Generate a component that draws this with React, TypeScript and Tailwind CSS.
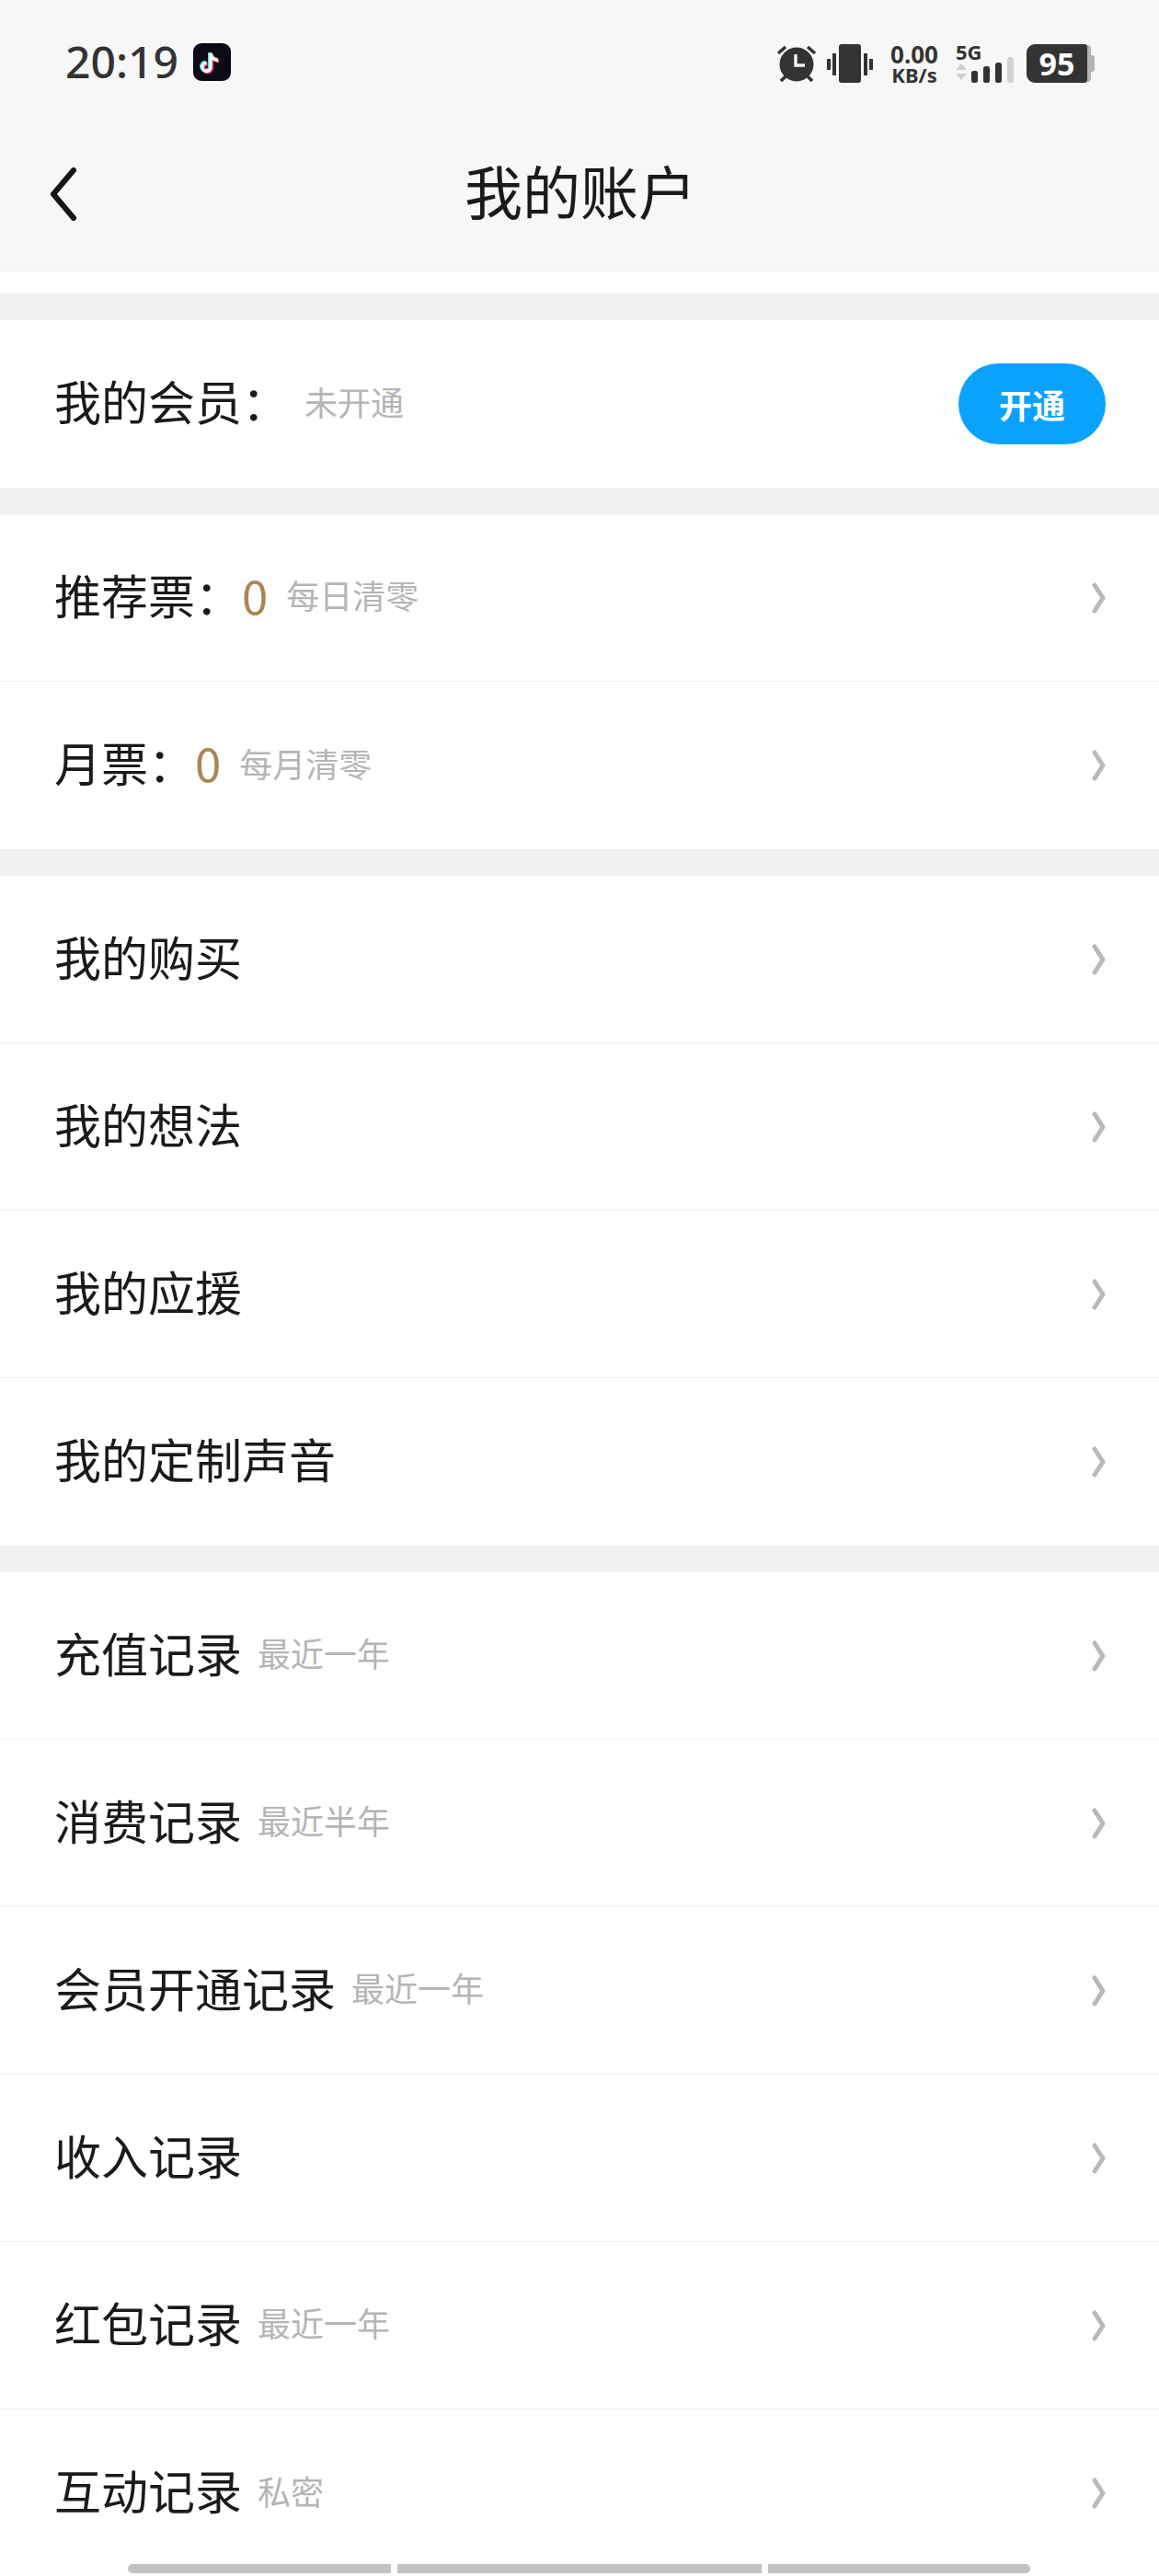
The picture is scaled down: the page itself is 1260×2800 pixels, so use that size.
const rowFont = { fontFamily: '"Noto Sans CJK SC", sans-serif' }

function Chevron() {
  return (
    <svg width="18" height="34" viewBox="0 0 18 34" className="mr-[58px] shrink-0">
      <path d="M6 3 L15 17 L6 31" fill="none" stroke="#b9b9b9" strokeWidth="5" strokeLinecap="round" strokeLinejoin="round" />
    </svg>
  )
}

function Row({ label, value, note, last }: { label: string; value?: string; note?: string; last?: boolean }) {
  return (
    <div className={`flex h-[182px] items-center bg-white pl-[59px] ${last ? '' : 'border-b border-[#f1f1f1]'}`}>
      <div className="flex items-center pb-[7px]">
        <span className="text-[51px] leading-none text-[#1a1a1a]">{label}</span>
        {value && <span className="pr-[3px] text-[51px] leading-none text-[#ad8553]">{value}</span>}
        {note && <span className="ml-[17px] text-[36px] leading-none text-[#b5b5b5]">{note}</span>}
      </div>
      <div className="flex-1" />
      <Chevron />
    </div>
  )
}

function Gap() {
  return <div className="h-[29px] bg-[#f1f1f1]" />
}

function TikTok() {
  return (
    <div className="ml-[16px] flex h-[41px] w-[41px] items-center justify-center rounded-[9px] bg-[#0b0b16]">
      <svg width="28" height="30" viewBox="0 0 28 30">
        <path d="M13 5 v15 a4.5 4.5 0 1 1 -4.5 -4.5 M13 5 c0.5 4 3.5 7 8 7.5" fill="none" stroke="#3ee0e6" strokeWidth="4" transform="translate(-1 -1)" />
        <path d="M13 5 v15 a4.5 4.5 0 1 1 -4.5 -4.5 M13 5 c0.5 4 3.5 7 8 7.5" fill="none" stroke="#f0305a" strokeWidth="4" transform="translate(1.2 1)" />
        <path d="M13 5 v15 a4.5 4.5 0 1 1 -4.5 -4.5 M13 5 c0.5 4 3.5 7 8 7.5" fill="none" stroke="#ffffff" strokeWidth="3.4" />
      </svg>
    </div>
  )
}

function StatusIcons() {
  return (
    <div className="flex items-center">
      <svg width="44" height="42" viewBox="0 0 44 42">
        <circle cx="22" cy="22" r="18.5" fill="#333" />
        <path d="M21 11 V23 H31" fill="none" stroke="#f7f7f7" strokeWidth="3.4" />
        <path d="M2 10 L10 3 M42 10 L34 3 M5 40 L10 35 M39 40 L34 35" stroke="#333" strokeWidth="3.6" />
      </svg>
      <svg width="50" height="42" viewBox="0 0 50 42" className="ml-[11px]">
        <rect x="13" y="0" width="24" height="42" rx="3" fill="#333" />
        <rect x="6" y="10" width="4" height="24" fill="#333" />
        <rect x="0" y="16" width="4" height="12" fill="#333" />
        <rect x="40" y="10" width="4" height="24" fill="#333" />
        <rect x="46" y="16" width="4" height="12" fill="#333" />
      </svg>
      <div className="ml-[18px] flex w-[54px] flex-col items-center font-bold text-[#333]" style={{ fontFamily: '"Noto Sans", sans-serif' }}>
        <span className="text-[26px] leading-[24px]">0.00</span>
        <span className="text-[22px] leading-[20px]">KB/s</span>
      </div>
      <div className="ml-[18px] flex h-[42px] w-[64px] flex-col justify-between">
        <span className="text-[22px] leading-[16px] font-bold text-[#333]" style={{ fontFamily: '"Noto Sans", sans-serif' }}>5G</span>
        <svg width="64" height="28" viewBox="0 0 64 28" className="-mt-[2px]">
          <path d="M0 12 L6 5 L12 12 Z M0 16 H12 L6 23 Z" fill="#cfcfcf" transform="translate(0 2)" />
          <rect x="17" y="15" width="7" height="13" rx="2.5" fill="#333" />
          <rect x="30" y="10" width="7" height="18" rx="2.5" fill="#333" />
          <rect x="43" y="6" width="7" height="22" rx="2.5" fill="#333" />
          <rect x="56" y="0" width="7" height="28" rx="2.5" fill="#d2d2d2" />
        </svg>
      </div>
      <div className="ml-[13px] flex items-center">
        <div className="flex h-[42px] w-[66px] items-center justify-center rounded-l-[9px] rounded-r-[3px] bg-[#333] text-[34px] leading-none font-bold text-white" style={{ fontFamily: '"Noto Sans", sans-serif' }}>
          95
        </div>
        <div className="h-[40px] w-[4px] rounded-r-[4px] bg-[#b2b2b2]" />
        <div className="h-[18px] w-[4px] rounded-r-[3px] bg-[#b2b2b2]" />
      </div>
    </div>
  )
}

export default function App() {
  return (
    <div className="relative h-[2800px] w-[1260px] overflow-hidden bg-white" style={rowFont}>
      <div className="h-[295px] border-b border-[#eeeeee] bg-[#f7f7f7]">
        <div className="flex items-start justify-between pt-[47px] pr-[70px] pl-[71px]">
          <div className="flex items-center">
            <span className="pb-[2px] text-[48px] leading-[39px] font-medium text-[#333]" style={{ fontFamily: '"Noto Sans", sans-serif' }}>20:19</span>
            <TikTok />
          </div>
          <StatusIcons />
        </div>
        <div className="relative mt-[74px] flex h-[92px] items-center justify-center">
          <svg width="30" height="58" viewBox="0 0 30 58" className="absolute top-[17px] left-[54px]">
            <path d="M26 3 L4 29 L26 55" fill="none" stroke="#151515" strokeWidth="6" strokeLinecap="round" strokeLinejoin="round" />
          </svg>
          <span className="pb-[12px] pl-[2px] text-[63px] leading-none text-[#1a1a1a]">我的账户</span>
        </div>
      </div>
      <div className="h-[24px]" />
      <Gap />
      <div className="flex h-[182px] items-center justify-between bg-white pr-[58px] pl-[59px]">
        <div className="flex items-center pb-[7px]">
          <span className="text-[51px] leading-none text-[#1a1a1a]">我的会员：</span>
          <span className="ml-[17px] text-[36px] leading-none text-[#b5b5b5]">未开通</span>
        </div>
        <div className="flex h-[88px] w-[160px] items-center justify-center rounded-full bg-[#0ba2ff] text-[36px] font-bold text-white">开通</div>
      </div>
      <Gap />
      <Row label="推荐票：" value="0" note="每日清零" />
      <Row label="月票：" value="0" note="每月清零" last />
      <Gap />
      <Row label="我的购买" />
      <Row label="我的想法" />
      <Row label="我的应援" />
      <Row label="我的定制声音" last />
      <Gap />
      <Row label="充值记录" note="最近一年" />
      <Row label="消费记录" note="最近半年" />
      <Row label="会员开通记录" note="最近一年" />
      <Row label="收入记录" />
      <Row label="红包记录" note="最近一年" />
      <Row label="互动记录" note="私密" last />
      <div className="absolute top-[2787px] left-[139px] flex h-[10px] gap-[7px]">
        <div className="w-[286px] rounded-l-full bg-[#c2c2c2]" />
        <div className="w-[396px] bg-[#c2c2c2]" />
        <div className="w-[285px] rounded-r-full bg-[#c2c2c2]" />
      </div>
    </div>
  )
}
